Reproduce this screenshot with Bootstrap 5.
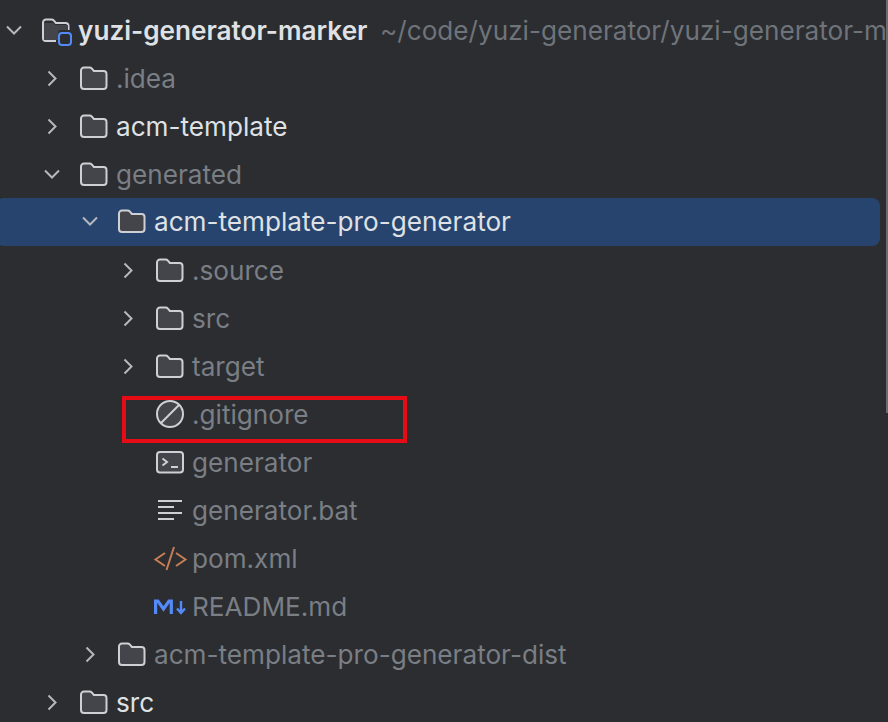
<!DOCTYPE html>
<html lang="en">
<head>
  <meta charset="UTF-8">
  <title>Project tree</title>
  <link href="https://cdn.jsdelivr.net/npm/bootstrap@5.3.0/dist/css/bootstrap.min.css" rel="stylesheet">
  <style>
    html, body { height: 100%; overflow: hidden; }
    body { background: #2b2d30; font-family: Inter, "Noto Sans", sans-serif; }
    .tree-panel { height: 722px; overflow: hidden; padding-top: 7px; }
    .tree-row { height: 48px; font-size: 26.15px; color: #7a7e85; white-space: nowrap; margin-right: 8px; border-radius: 8px; }
    .tree-row.active-row { background: #27446f; color: #dfe1e5; margin-left: -4px; margin-top: -1px; margin-bottom: 1px; padding-left: 84px; }
    .tree-row.bright { color: #dfe1e5; }
    .tree-row.root-row { color: #dfe1e5; font-weight: 600; margin-right: 0; }
    .tree-row.root-row .root-path { color: #6f737a; font-weight: 400; margin-left: 12.5px; }
    .lvl-0 { padding-left: 4px; }
    .lvl-1 { padding-left: 42px; }
    .lvl-2 { padding-left: 80px; }
    .lvl-3 { padding-left: 118px; }
    .arrow-box { width: 38px; flex: none; }
    .leaf-box { width: 38px; flex: none; }
    .ico-box { width: 36px; flex: none; }
    .tree-icon { display: block; margin-left: -1px; overflow: visible; }
    .arrow-d { display: block; margin-left: 1px; }
    .arrow-r { display: block; margin-left: 4px; }
    .hl-box { position: absolute; left: 122px; top: 396px; width: 285px; height: 47px; border: 4px solid #e60b14; }
    .side-thumb { position: absolute; right: 0; top: 0; width: 2px; height: 413px; background: #6a6c70; }
  </style>
</head>
<body>
<svg width="0" height="0" class="position-absolute">
  <defs>
    <symbol id="folder" viewBox="0 1 30 26">
      <path d="M2 5.500A3 3 0 0 1 5 2.500h5.500c1 0 1.800.4 2.400 1.100l2 2.400h9.600a3 3 0 0 1 3 3V21a3 3 0 0 1-3 3H5a3 3 0 0 1-3-3z" fill="#43454a" stroke="#ced0d6" stroke-width="2"/>
    </symbol>
    <symbol id="arrow-down" viewBox="0 1 18 12">
      <path d="M2 2.500 9 9.500 16 2.500" fill="none" stroke="#b4b8bf" stroke-width="2"/>
    </symbol>
    <symbol id="arrow-right" viewBox="0 0.500 12 18">
      <path d="M2.500 2 9.500 9 2.500 16" fill="none" stroke="#b4b8bf" stroke-width="2"/>
    </symbol>
  </defs>
</svg>

<div class="tree-panel position-relative">
  <div class="tree-row root-row lvl-0 d-flex align-items-center">
    <div class="arrow-box"><svg class="arrow-d" width="18" height="12"><use href="#arrow-down"/></svg></div>
    <div class="ico-box position-relative">
      <svg class="tree-icon" width="30" height="26" viewBox="0 1 30 26">
        <path d="M2 5.500A3 3 0 0 1 5 2.500h5.500c1 0 1.800.4 2.400 1.100l2 2.400h9.600a3 3 0 0 1 3 3V13M15 24H5a3 3 0 0 1-3-3V5.500" fill="none" stroke="#ced0d6" stroke-width="2"/>
        <path d="M3 6h9.500l2 2H27v5h-7a3 3 0 0 0-3 3v7H3z" fill="#43454a"/>
        <rect x="18" y="16" width="12" height="12" rx="3" fill="#2b2d30" stroke="#548af7" stroke-width="2"/>
      </svg>
    </div>
    <span>yuzi-generator-marker</span><span class="root-path">~/code/yuzi-generator/yuzi-generator-marker</span>
  </div>

  <div class="tree-row lvl-1 d-flex align-items-center">
    <div class="arrow-box"><svg class="arrow-r" width="12" height="18"><use href="#arrow-right"/></svg></div>
    <div class="ico-box"><svg class="tree-icon" width="30" height="26"><use href="#folder"/></svg></div>
    <span>.idea</span>
  </div>
  <div class="tree-row bright lvl-1 d-flex align-items-center">
    <div class="arrow-box"><svg class="arrow-r" width="12" height="18"><use href="#arrow-right"/></svg></div>
    <div class="ico-box"><svg class="tree-icon" width="30" height="26"><use href="#folder"/></svg></div>
    <span>acm-template</span>
  </div>
  <div class="tree-row lvl-1 d-flex align-items-center">
    <div class="arrow-box"><svg class="arrow-d" width="18" height="12"><use href="#arrow-down"/></svg></div>
    <div class="ico-box"><svg class="tree-icon" width="30" height="26"><use href="#folder"/></svg></div>
    <span>generated</span>
  </div>
  <div class="tree-row active-row lvl-2 d-flex align-items-center">
    <div class="arrow-box"><svg class="arrow-d" width="18" height="12"><use href="#arrow-down"/></svg></div>
    <div class="ico-box"><svg class="tree-icon" width="30" height="26"><use href="#folder"/></svg></div>
    <span>acm-template-pro-generator</span>
  </div>
  <div class="tree-row lvl-3 d-flex align-items-center">
    <div class="arrow-box"><svg class="arrow-r" width="12" height="18"><use href="#arrow-right"/></svg></div>
    <div class="ico-box"><svg class="tree-icon" width="30" height="26"><use href="#folder"/></svg></div>
    <span>.source</span>
  </div>
  <div class="tree-row lvl-3 d-flex align-items-center">
    <div class="arrow-box"><svg class="arrow-r" width="12" height="18"><use href="#arrow-right"/></svg></div>
    <div class="ico-box"><svg class="tree-icon" width="30" height="26"><use href="#folder"/></svg></div>
    <span>src</span>
  </div>
  <div class="tree-row lvl-3 d-flex align-items-center">
    <div class="arrow-box"><svg class="arrow-r" width="12" height="18"><use href="#arrow-right"/></svg></div>
    <div class="ico-box"><svg class="tree-icon" width="30" height="26"><use href="#folder"/></svg></div>
    <span>target</span>
  </div>
  <div class="tree-row lvl-3 d-flex align-items-center">
    <div class="leaf-box"></div>
    <div class="ico-box">
      <svg class="tree-icon" width="30" height="30" viewBox="0 1 30 30">
        <circle cx="15" cy="15" r="13" fill="#43454a" stroke="#ced0d6" stroke-width="2"/>
        <path d="M5.500 24.500 24.500 5.500" stroke="#ced0d6" stroke-width="2"/>
      </svg>
    </div>
    <span>.gitignore</span>
  </div>
  <div class="tree-row lvl-3 d-flex align-items-center">
    <div class="leaf-box"></div>
    <div class="ico-box">
      <svg class="tree-icon" width="30" height="26" viewBox="0 0 30 26">
        <rect x="2" y="2" width="26" height="20.500" rx="3" fill="#43454a" stroke="#ced0d6" stroke-width="2"/>
        <path d="M7.500 8.500 12 12 7.500 15.500M16 17h7" fill="none" stroke="#ced0d6" stroke-width="2"/>
      </svg>
    </div>
    <span>generator</span>
  </div>
  <div class="tree-row lvl-3 d-flex align-items-center">
    <div class="leaf-box"></div>
    <div class="ico-box">
      <svg class="tree-icon" width="30" height="24" viewBox="0 0 30 24">
        <path d="M3 2h24M3 8h16M3 14h24M3 20h16" fill="none" stroke="#ced0d6" stroke-width="2"/>
      </svg>
    </div>
    <span>generator.bat</span>
  </div>
  <div class="tree-row lvl-3 d-flex align-items-center">
    <div class="leaf-box"></div>
    <div class="ico-box">
      <svg class="tree-icon" width="32" height="26" viewBox="0 0 32 26">
        <path d="M10 7 .5 13.500 10 20M21 7 30.500 13.500 21 20M19 1 11.500 24" fill="none" stroke="#c77d55" stroke-width="2"/>
      </svg>
    </div>
    <span>pom.xml</span>
  </div>
  <div class="tree-row lvl-3 d-flex align-items-center">
    <div class="leaf-box"></div>
    <div class="ico-box">
      <svg class="tree-icon" width="32" height="18" viewBox="0 0 32 18">
        <path d="M.6 16V3h2.300L8.500 11 14 3h2.300v13" fill="none" stroke="#548af7" stroke-width="3.200"/>
        <path d="M26 3v12M22 10.500 26 15 30 10.500" fill="none" stroke="#548af7" stroke-width="2.400"/>
      </svg>
    </div>
    <span>README.md</span>
  </div>
  <div class="tree-row lvl-2 d-flex align-items-center">
    <div class="arrow-box"><svg class="arrow-r" width="12" height="18"><use href="#arrow-right"/></svg></div>
    <div class="ico-box"><svg class="tree-icon" width="30" height="26"><use href="#folder"/></svg></div>
    <span>acm-template-pro-generator-dist</span>
  </div>
  <div class="tree-row bright lvl-1 d-flex align-items-center">
    <div class="arrow-box"><svg class="arrow-r" width="12" height="18"><use href="#arrow-right"/></svg></div>
    <div class="ico-box"><svg class="tree-icon" width="30" height="26"><use href="#folder"/></svg></div>
    <span>src</span>
  </div>

  <div class="hl-box"></div>
  <div class="side-thumb"></div>
</div>
</body>
</html>
